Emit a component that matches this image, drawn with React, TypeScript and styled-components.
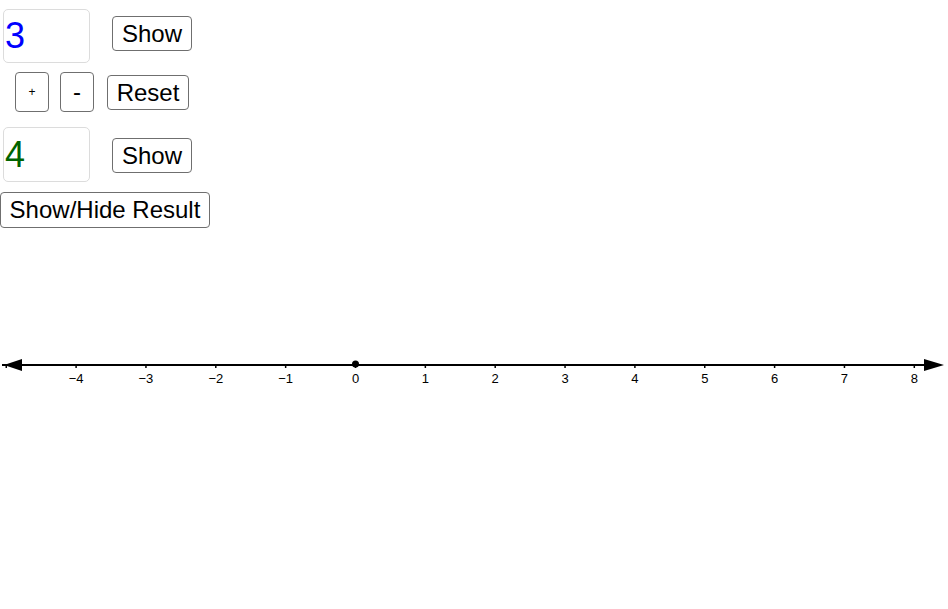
import styled, { createGlobalStyle } from "styled-components";

const GlobalStyle = createGlobalStyle`
    html, body {
        margin: 0;
        padding: 0;
        background: #ffffff;
    }
    body {
        font-family: "Liberation Sans", Arial, sans-serif;
        overflow: hidden;
    }
`;

const Page = styled.div`
    width: 948px;
    height: 609px;
    display: flex;
    flex-direction: column;
    padding-top: 9px;
    box-sizing: border-box;
`;

const Row = styled.div<{ $top?: number; $left?: number; $gap?: number }>`
    display: flex;
    align-items: flex-start;
    margin-top: ${(p) => p.$top ?? 0}px;
    padding-left: ${(p) => p.$left ?? 0}px;
    gap: ${(p) => p.$gap ?? 0}px;
`;

const NumberBox = styled.input<{ $color: string; $h: number }>`
    width: 87px;
    height: ${(p) => p.$h}px;
    box-sizing: border-box;
    border: 1px solid #dcdcdc;
    border-radius: 5px;
    padding: 0 0 0 1px;
    margin: 0;
    font-family: "Liberation Sans", Arial, sans-serif;
    font-size: 36px;
    color: ${(p) => p.$color};
    background: #ffffff;
    outline: none;
`;

const Button = styled.button<{ $w: number; $h: number; $size?: number; $offset?: number }>`
    width: ${(p) => p.$w}px;
    height: ${(p) => p.$h}px;
    margin: ${(p) => p.$offset ?? 0}px 0 0 0;
    padding: 0;
    box-sizing: border-box;
    border: 1px solid #6f6f6f;
    border-radius: 4px;
    background: #ffffff;
    color: #000000;
    font-family: "Liberation Sans", Arial, sans-serif;
    font-size: ${(p) => p.$size ?? 24}px;
    line-height: 1;
    display: flex;
    align-items: center;
    justify-content: center;
    cursor: pointer;
`;

const LineWrap = styled.div`
    margin-top: 112px;
    width: 948px;
    height: 50px;
`;

const TICK_STEP = 69.85;
const ZERO_X = 355.5;
const AXIS_Y = 25;

const NumberLine = () => {
    const ticks = [];
    for (let n = -5; n <= 8; n++) ticks.push(n);
    return (
        <svg width="948" height="50" viewBox="0 0 948 50">
            <line x1="2" y1={AXIS_Y} x2="930" y2={AXIS_Y} stroke="#000" strokeWidth="2" />
            <polygon points={`4,${AXIS_Y} 22,${AXIS_Y - 6} 22,${AXIS_Y + 6}`} fill="#000" />
            <polygon points={`944,${AXIS_Y} 924,${AXIS_Y - 6} 924,${AXIS_Y + 6}`} fill="#000" />
            {ticks.map((n) => {
                const x = ZERO_X + n * TICK_STEP;
                return (
                    <g key={n}>
                        <line x1={x} y1={AXIS_Y} x2={x} y2={AXIS_Y + 3} stroke="#000" strokeWidth="1.5" />
                        {n > -5 && (
                            <text
                                x={x}
                                y={AXIS_Y + 18}
                                textAnchor="middle"
                                fontFamily="'Liberation Sans', Arial, sans-serif"
                                fontSize="13"
                                fill="#000"
                            >
                                {n < 0 ? `\u2212${-n}` : n}
                            </text>
                        )}
                    </g>
                );
            })}
            <circle cx={ZERO_X} cy={AXIS_Y - 1} r="3.5" fill="#000" />
        </svg>
    );
};

export default function App() {
    return (
        <>
            <GlobalStyle />
            <Page>
                <Row $left={3} $gap={22}>
                    <NumberBox $color="#0000ff" $h={54} defaultValue="3" />
                    <Button $w={80} $h={35} $offset={7}>Show</Button>
                </Row>
                <Row $top={9} $left={15} $gap={11}>
                    <Button $w={34} $h={40} $size={12}>+</Button>
                    <Button $w={34} $h={40}>-</Button>
                    <Button $w={82} $h={35} $offset={3} style={{ marginLeft: 2 }}>Reset</Button>
                </Row>
                <Row $top={15} $left={3} $gap={22}>
                    <NumberBox $color="#006400" $h={55} defaultValue="4" />
                    <Button $w={80} $h={35} $offset={11}>Show</Button>
                </Row>
                <Row $top={10}>
                    <Button $w={210} $h={36}>Show/Hide Result</Button>
                </Row>
                <LineWrap>
                    <NumberLine />
                </LineWrap>
            </Page>
        </>
    );
}
